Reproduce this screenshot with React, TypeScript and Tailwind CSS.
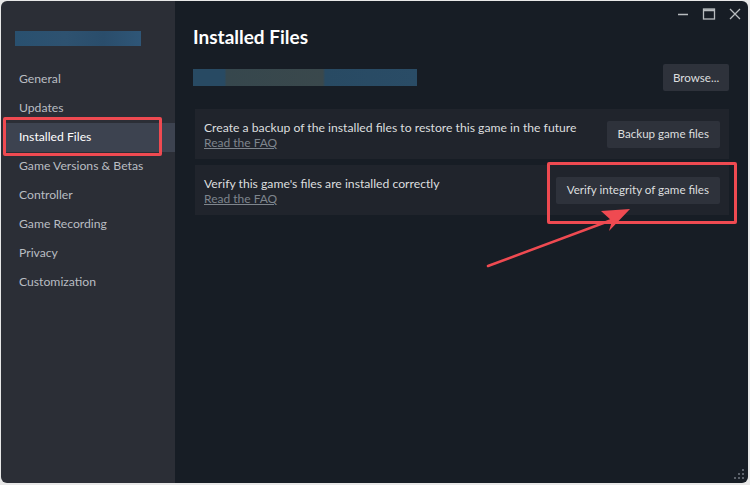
import React from "react";

const navItems = [
  "General",
  "Updates",
  "Installed Files",
  "Game Versions & Betas",
  "Controller",
  "Game Recording",
  "Privacy",
  "Customization",
];

function ActionRow({ text, button, boxed }: { text: string; button: string; boxed?: boolean }) {
  return (
    <div className="flex items-center justify-between bg-[#20242c] pl-[9px] pr-[9px] h-[50px]">
      <div className="flex flex-col leading-[15px] pt-[1px] whitespace-nowrap">
        <span className="text-[12.2px] text-[#dcdedf]">{text}</span>
        <span className="text-[12px] text-[#7e858d] underline">Read the FAQ</span>
      </div>
      <div className="relative">
        <button className="h-[27px] px-[11px] rounded-[2px] bg-[#2e323b] text-[11.6px] text-[#dcdedf] whitespace-nowrap">{button}</button>
        {boxed && (
          <div className="absolute left-[-9px] right-[-17px] top-[-14px] bottom-[-20px] border-[3px] border-[#ef4a51] rounded-[2px]" />
        )}
      </div>
    </div>
  );
}

export default function App() {
  return (
    <div className="w-[750px] h-[485px] bg-[#e8e8e8] p-[1px] pr-[2px] pb-[2px] font-['Lato',sans-serif]">
      <div className="relative flex h-full rounded-[6px] overflow-hidden">
        {/* Sidebar */}
        <div className="w-[174px] bg-[#2b2e36] flex flex-col">
          <div className="ml-[14px] mt-[30px] w-[126px] h-[15px] bg-[linear-gradient(90deg,#29506f,#2e5270_40%,#2a4d6b_70%,#2f5677)]" />
          <div className="mt-[19px] flex flex-col">
            {navItems.map((n) => {
              const active = n === "Installed Files";
              return (
                <div
                  key={n}
                  className={`relative h-[29px] flex items-center pl-[16px] ml-[2px] text-[12.2px] whitespace-nowrap ${
                    active ? "bg-[#3d4350] text-white" : "text-[#b9bdc2]"
                  }`}
                >
                  {n}
                  {active && (
                    <div className="absolute left-0 top-[-6px] w-[159px] h-[39px] border-[3px] border-[#ef4a51] rounded-[2px]" />
                  )}
                </div>
              );
            })}
          </div>
        </div>

        {/* Main */}
        <div className="flex-1 bg-[#171d25] relative flex flex-col pl-[18px] pr-[19px]">
          {/* window controls */}
          <div className="absolute right-[6px] top-[6px] flex items-center gap-[12px] text-[#b8bcbf]">
            <svg width="14" height="14" viewBox="0 0 14 14"><path d="M2 7.5h10" stroke="currentColor" strokeWidth="1.3" /></svg>
            <svg width="14" height="14" viewBox="0 0 14 14"><rect x="1.5" y="2" width="11" height="10" fill="none" stroke="currentColor" strokeWidth="1.3" /><path d="M1.5 3.2h11" stroke="currentColor" strokeWidth="2" /></svg>
            <svg width="14" height="14" viewBox="0 0 14 14"><path d="M2 2l10 10M12 2L2 12" stroke="currentColor" strokeWidth="1.3" /></svg>
          </div>

          <h1 className="mt-[24px] text-[19px] font-bold text-white leading-[24px]">Installed Files</h1>

          <div className="mt-[15px] flex items-center justify-between">
            <div className="w-[224px] h-[17px] bg-[linear-gradient(90deg,#284a63_0%,#284a63_14%,#36474d_15%,#3a484c_58%,#284a63_59%,#2a4c66_100%)]" />
            <button className="h-[27px] w-[66px] rounded-[2px] bg-[#2e323b] text-[11.6px] text-[#dcdedf]">Browse...</button>
          </div>

          <div className="mt-[18px] flex flex-col gap-[6px] ml-[2px]">
            <ActionRow text="Create a backup of the installed files to restore this game in the future" button="Backup game files" />
            <ActionRow text="Verify this game's files are installed correctly" button="Verify integrity of game files" boxed />
          </div>

          {/* arrow */}
          <svg className="absolute left-[310px] top-[200px]" width="160" height="72" viewBox="0 0 160 72">
            <path d="M3 65 L132 17" stroke="#ef4a51" strokeWidth="2.5" strokeLinecap="round" />
            <path d="M116 10 L145 8 L124 30 L127 20 Z" fill="#ef4a51" />
          </svg>

          {/* resize grip */}
          <svg className="absolute right-[3px] bottom-[3px]" width="12" height="12" viewBox="0 0 12 12" fill="#5b616a">
            <rect x="9" y="1" width="2" height="2" />
            <rect x="5" y="5" width="2" height="2" />
            <rect x="9" y="5" width="2" height="2" />
            <rect x="1" y="9" width="2" height="2" />
            <rect x="5" y="9" width="2" height="2" />
            <rect x="9" y="9" width="2" height="2" />
          </svg>
        </div>
      </div>
    </div>
  );
}
